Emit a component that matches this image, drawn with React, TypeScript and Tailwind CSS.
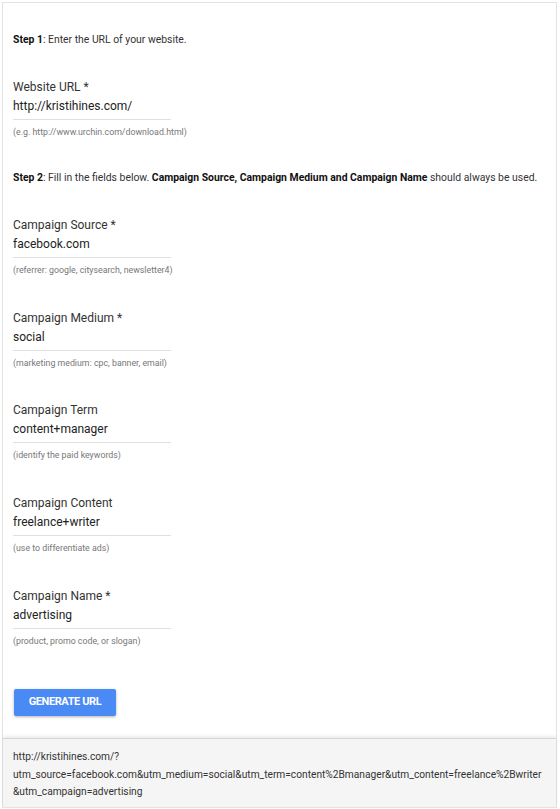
import React from 'react';

interface FieldProps {
  label: string;
  value: string;
  hint: string;
  className?: string;
}

const Field: React.FC<FieldProps> = ({ label, value, hint, className }) => (
  <div className={className}>
    <div className="h-[20px] leading-[22px] text-[12px] text-[#333]">{label}</div>
    <div className="w-[158px] h-[24px] pb-[3px] border-b border-[#e0e0e0] leading-[21px] text-[12px] text-[#222]">
      {value}
    </div>
    <div className="mt-[6px] h-[12px] leading-[12px] text-[8.8px] text-[#777]">{hint}</div>
  </div>
);

export default function App() {
  return (
    <div className="w-[560px] min-h-[809px] bg-white pt-[2px] pl-[2px] font-['Roboto','Liberation_Sans',sans-serif]">
      <div className="w-[555px] border border-[#e3e3e3]">
        <div className="px-[10px] pt-[30px] pb-[22px]">
          <p className="h-[14px] leading-[14px] text-[10.4px] text-[#333]">
            <span className="font-bold text-[#111]">Step 1</span>: Enter the URL of your website.
          </p>

          <Field
            className="mt-[29px]"
            label="Website URL *"
            value="http://kristihines.com/"
            hint="(e.g. http://www.urchin.com/download.html)"
          />

          <p className="mt-[33px] h-[14px] leading-[14px] text-[10.4px] text-[#333]">
            <span className="font-bold text-[#111]">Step 2</span>: Fill in the fields below.{' '}
            <span className="font-bold text-[#111]">Campaign Source, Campaign Medium and Campaign Name</span> should
            always be used.
          </p>

          <Field
            className="mt-[29px]"
            label="Campaign Source *"
            value="facebook.com"
            hint="(referrer: google, citysearch, newsletter4)"
          />
          <Field
            className="mt-[31px]"
            label="Campaign Medium *"
            value="social"
            hint="(marketing medium: cpc, banner, email)"
          />
          <Field
            className="mt-[30px]"
            label="Campaign Term"
            value="content+manager"
            hint="(identify the paid keywords)"
          />
          <Field
            className="mt-[31px]"
            label="Campaign Content"
            value="freelance+writer"
            hint="(use to differentiate ads)"
          />
          <Field
            className="mt-[31px]"
            label="Campaign Name *"
            value="advertising"
            hint="(product, promo code, or slogan)"
          />

          <button className="mt-[42px] ml-[1px] w-[102px] h-[27px] rounded-[2px] bg-[#4a8af4] text-white text-[11px] font-bold tracking-[-0.4px] shadow-[0_1px_3px_rgba(0,0,0,0.3)]">
            GENERATE URL
          </button>
        </div>

        <div className="border-t border-[#d6d6d6] shadow-[0_-2px_3px_rgba(0,0,0,0.08)] bg-[#f5f5f5] pl-[10px] pr-[2px] pt-[9px] pb-[6px] text-[10.2px] leading-[17.5px] text-[#333] whitespace-nowrap">
          <div>http://kristihines.com/?</div>
          <div>utm_source=facebook.com&amp;utm_medium=social&amp;utm_term=content%2Bmanager&amp;utm_content=freelance%2Bwriter</div>
          <div>&amp;utm_campaign=advertising</div>
        </div>
      </div>
    </div>
  );
}
